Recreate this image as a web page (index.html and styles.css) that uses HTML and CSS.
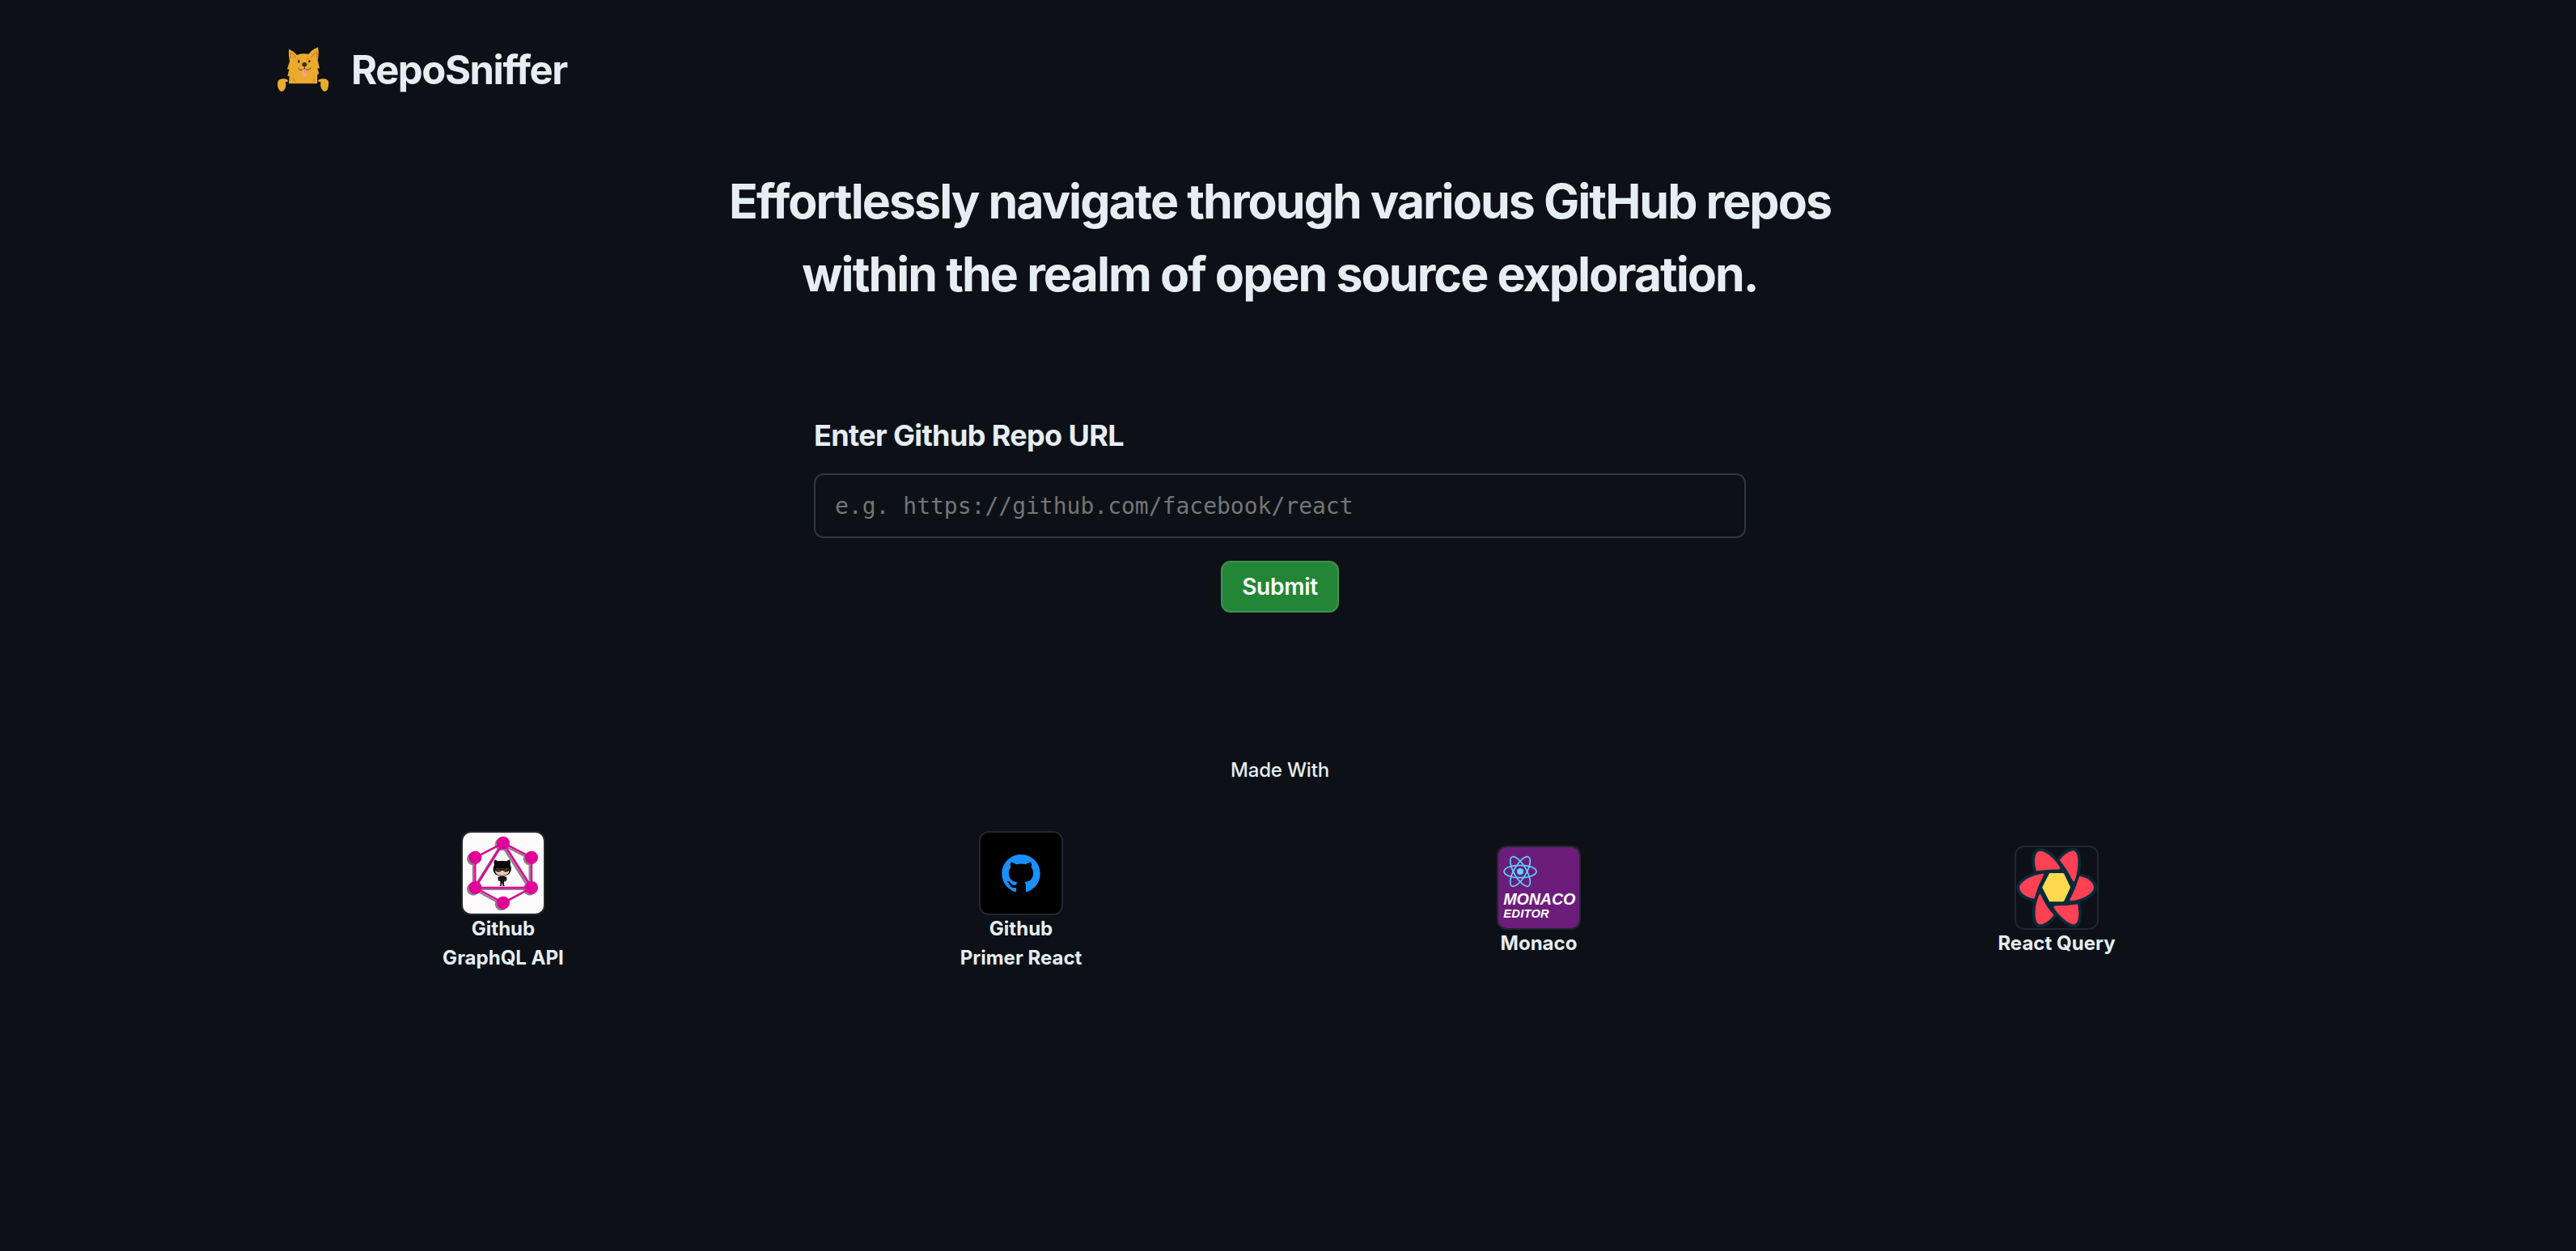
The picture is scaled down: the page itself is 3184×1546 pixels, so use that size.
FILE: index.html
```html
<!DOCTYPE html>
<html lang="en">
<head>
<meta charset="utf-8">
<title>RepoSniffer</title>
<link rel="stylesheet" href="styles.css">
</head>
<body>
<div class="page">
  <header class="header">
    <svg class="logo" viewBox="0 0 240 210" aria-hidden="true">
      <g fill="#e9ab2d">
        <path d="M66 32Q82 38 96 54Q110 46 140 50Q152 34 174 25Q179 48 173 72L180 104L172 103L178 124L172 126L171 160H66L68 133L61 132L67 107L60 106L69 77Q64 54 66 32Z"/>
        <path d="M28 148Q36 140 50 142Q64 144 63 152L54 154Q58 176 46 187Q34 194 27 178Q20 158 28 148Z"/>
        <path d="M211 148Q203 140 190 142Q174 144 174 152L184 154Q181 176 193 187Q206 193 211 178Q216 158 211 148Z"/>
      </g>
      <g fill="none" stroke="#d9792b" stroke-width="4">
        <path d="M75 67Q68 52 73 46Q84 48 92 66"/>
        <path d="M149 65Q158 48 169 43Q174 54 168 64"/>
        <path d="M97 73L107 68M130 70L140 67M82 138L87 151L93 154M161 139L158 151L152 156" stroke-width="3"/>
      </g>
      <g fill="#4a2b1c">
        <ellipse cx="103" cy="78" rx="4" ry="5"/>
        <ellipse cx="142" cy="77" rx="4" ry="5"/>
        <ellipse cx="124" cy="89" rx="9" ry="8"/>
      </g>
      <path d="M101 103Q112 115 124 105Q136 115 148 102M124 95V106" fill="none" stroke="#4a2b1c" stroke-width="3"/>
      <path d="M116 108Q124 104 131 108L131 128Q123 143 115 128Z" fill="#fb9f8e"/>
      <path d="M124 109V120" stroke="#e17969" stroke-width="2"/>
    </svg>
    <span class="brand">RepoSniffer</span>
  </header>

  <h1 class="headline">Effortlessly navigate through various GitHub repos<br>within the realm of open source exploration.</h1>

  <form class="form">
    <label class="label" for="repo">Enter Github Repo URL</label>
    <input class="input" id="repo" type="text" placeholder="e.g. https://github.com/facebook/react">
    <button class="submit" type="button">Submit</button>
  </form>

  <p class="made">Made With</p>

  <div class="tools">
    <div class="tool">
      <svg class="tile" viewBox="126 57 300 300" aria-hidden="true">
        <rect x="126" y="57" width="300" height="300" fill="#fdfafc"/>
        <defs>
          <g id="graph">
            <path d="M276 95L172 149V261L276 317L381 261V149Z" fill="none" stroke-width="7"/>
            <path d="M276 95L172 261H381Z" fill="none" stroke-width="8"/>
            <g stroke="none">
              <circle cx="276" cy="95" r="24"/><circle cx="172" cy="149" r="24"/>
              <circle cx="381" cy="149" r="24"/><circle cx="172" cy="261" r="24"/>
              <circle cx="381" cy="261" r="24"/><circle cx="276" cy="317" r="24"/>
            </g>
          </g>
          <filter id="soft"><feGaussianBlur stdDeviation="2"/></filter>
        </defs>
        <use href="#graph" x="-7" y="5" fill="#8c8189" stroke="#8c8189" filter="url(#soft)"/>
        <use href="#graph" fill="#e10098" stroke="#e10098"/>
        <path d="M244 157L257 163Q272 160 287 163L300 157Q304 168 302 176Q308 186 305 197Q299 218 272 218Q244 218 239 197Q237 185 243 176Q240 168 244 157Z" fill="#0c090b"/>
        <path d="M248 190H297C301 208 292 216 272 216C252 216 244 208 248 190Z" fill="#ecc6aa"/>
        <path d="M244 190H301L297 197Q291 205 281 202L275 197H270L264 202Q253 205 248 197Z" fill="#171314"/>
        <path d="M252 195L266 197M278 197L292 194" stroke="#8c8384" stroke-width="2"/>
        <path d="M256 221Q272 215 288 221L290 231L283 239L279 237V252L282 255H274L272 242L269 255H262L265 252V238L257 235Z" fill="#19131a"/>
        <path d="M259 229L263 237M286 229L281 238" stroke="#a32c83" stroke-width="2"/>
      </svg>
      <span class="name">Github<br>GraphQL API</span>
    </div>
    <div class="tool">
      <svg class="tile" viewBox="126 57 300 300" aria-hidden="true">
        <rect x="126" y="57" width="300" height="300" fill="#000"/>
        <path transform="translate(205 136.200) scale(5.920)" fill="#1a8fff" d="M12 .297c-6.630 0-12 5.373-12 12 0 5.303 3.438 9.800 8.205 11.385.600.113.820-.258.820-.577 0-.285-.010-1.040-.015-2.040-3.338.724-4.042-1.610-4.042-1.610C4.422 18.070 3.633 17.700 3.633 17.700c-1.087-.744.084-.729.084-.729 1.205.084 1.838 1.236 1.838 1.236 1.070 1.835 2.809 1.305 3.495.998.108-.776.417-1.305.760-1.605-2.665-.300-5.466-1.332-5.466-5.930 0-1.310.465-2.380 1.235-3.220-.135-.303-.540-1.523.105-3.176 0 0 1.005-.322 3.300 1.230.960-.267 1.980-.399 3-.405 1.020.006 2.040.138 3 .405 2.280-1.552 3.285-1.230 3.285-1.230.645 1.653.240 2.873.120 3.176.765.840 1.230 1.910 1.230 3.220 0 4.610-2.805 5.625-5.475 5.920.420.360.810 1.096.810 2.220 0 1.606-.015 2.896-.015 3.286 0 .315.210.690.825.570C20.565 22.092 24 17.592 24 12.297c0-6.627-5.373-12-12-12"/>
      </svg>
      <span class="name">Github<br>Primer React</span>
    </div>
    <div class="tool">
      <svg class="tile" viewBox="96 51 300 300" aria-hidden="true">
        <rect x="96" y="51" width="300" height="300" fill="#6c1d7c"/>
        <g fill="none" stroke="#5ed3f8" stroke-width="5">
          <ellipse cx="177" cy="141" rx="60" ry="23"/>
          <ellipse cx="177" cy="141" rx="62" ry="23" transform="rotate(60 177 141)"/>
          <ellipse cx="177" cy="141" rx="62" ry="23" transform="rotate(120 177 141)"/>
        </g>
        <circle cx="177" cy="141" r="12" fill="#5ed3f8"/>
        <g class="monaco">
          <text x="115" y="263" font-size="59" textLength="267">MONACO</text>
          <text x="115" y="311" font-size="44" textLength="169">EDITOR</text>
        </g>
      </svg>
      <span class="name">Monaco</span>
    </div>
    <div class="tool">
      <svg class="tile" viewBox="126 51 300 300" aria-hidden="true">
        <defs>
          <g id="petals">
            <path d="M202 138C190 100 197 66 215 66C238 66 275 100 288 127Q290 132 284 132Q240 133 202 138Z"/>
            <path d="M288 99C305 76 325 65 340 65C358 68 360 130 342 176Q340 180 336 174Q315 130 288 99Z"/>
            <path d="M361 160C395 165 413 183 413 200C413 222 370 246 328 249Q324 248 327 244Q348 205 361 160Z"/>
            <path d="M353 263C362 300 356 335 342 336C322 338 285 305 266 274Q266 270 271 269Q315 269 353 263Z"/>
            <path d="M216 226Q234 270 265 302C248 325 228 337 213 336C194 333 192 275 212 227Q214 223 216 226Z"/>
            <path d="M228 153Q203 200 193 241C160 235 139 218 139 200C141 178 185 155 225 150Q229 150 228 153Z"/>
          </g>
        </defs>
        <use href="#petals" fill="#002b3b" stroke="#002b3b" stroke-width="24" stroke-linejoin="round"/>
        <path d="M247 140H304L334 200L304 260H247L215 200Z" fill="#002b3b" stroke="#002b3b" stroke-width="14"/>
        <use href="#petals" fill="#ff4154" stroke="#ff4154" stroke-width="2"/>
        <path d="M252 151H300L323 200L300 249H252L227 200Z" fill="#ffd94c" stroke="#ffd94c" stroke-width="8" stroke-linejoin="round"/>
      </svg>
      <span class="name">React Query</span>
    </div>
  </div>
</div>
</body>
</html>
```
FILE: styles.css
```css
* { box-sizing: border-box; }
body {
  margin: 0;
  min-height: 100vh;
  background: #0d1117;
  color: #e6edf3;
  font-family: Inter, "Liberation Sans", sans-serif;
  font-weight: 650;
}
.page {
  width: 2560px;
  margin-left: 302px;
  padding-top: 50px;
  display: flex;
  flex-direction: column;
}
.header {
  height: 70px;
  padding-left: 33px;
  display: flex;
  align-items: center;
  gap: 19px;
}
.logo { width: 80px; height: 70px; }
.brand {
  font-size: 49px;
  line-height: 72px;
  letter-spacing: -1.45px;
  padding-top: 3px;
}
.headline {
  margin: 84px 0 0;
  text-align: center;
  font-size: 59px;
  font-weight: 650;
  line-height: 90px;
  letter-spacing: -1.92px;
}
.form {
  width: 1152px;
  margin: 127px auto 0;
  display: flex;
  flex-direction: column;
}
.label {
  font-size: 36px;
  line-height: 54px;
  letter-spacing: -0.63px;
}
.input {
  height: 80px;
  margin-top: 20px;
  padding: 0 24px;
  border: 2px solid #30363d;
  border-radius: 12px;
  background: #0d1117;
  color: #e6edf3;
  font: 28px "DejaVu Sans Mono", monospace;
}
.input::placeholder { color: #757575; }
.submit {
  align-self: center;
  width: 146px;
  height: 64px;
  margin-top: 28px;
  padding: 0;
  border: 2px solid #43914f;
  border-radius: 12px;
  background: #238636;
  color: #fff;
  font: 600 28px Inter, sans-serif;
  letter-spacing: -0.27px;
}
.made {
  margin: 177px 0 0;
  text-align: center;
  font-size: 24px;
  font-weight: 450;
  line-height: 36px;
  letter-spacing: -0.2px;
}
.tools {
  margin-top: 57px;
  display: grid;
  grid-template-columns: repeat(4, 1fr);
  align-items: center;
}
.tool {
  display: flex;
  flex-direction: column;
  align-items: center;
}
.tile {
  width: 104px;
  height: 104px;
  border: 2px solid #22272e;
  border-radius: 12px;
}
.name {
  margin: -1px 0 1px;
  text-align: center;
  font-size: 24px;
  line-height: 36px;
  letter-spacing: 0.02px;
}
.monaco {
  fill: #fff;
  font-family: "Liberation Sans", Arial, sans-serif;
  font-weight: 700;
  font-style: italic;
}
```
